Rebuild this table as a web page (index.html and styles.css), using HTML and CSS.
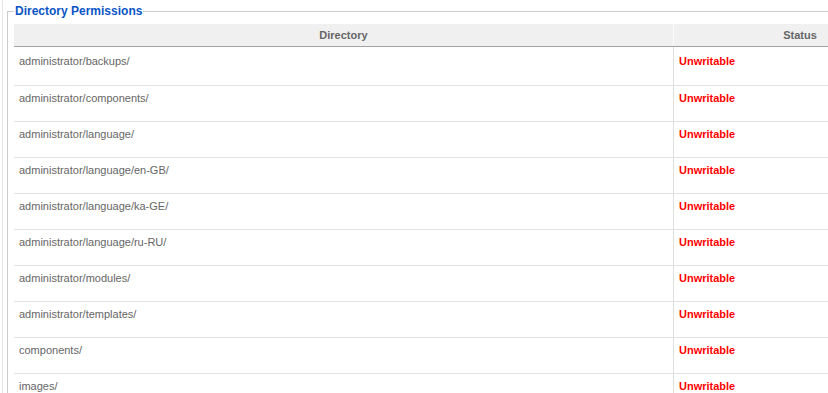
FILE: index.html
```html
<!DOCTYPE html>
<html>
<head>
<meta charset="utf-8">
<title>Directory Permissions</title>
<link rel="stylesheet" href="styles.css">
</head>
<body>
<div class="page">
  <fieldset class="panel">
    <legend class="panel-title">Directory Permissions</legend>
    <table class="adminlist">
      <thead>
        <tr>
          <th class="col-dir">Directory</th>
          <th class="col-status">Status</th>
        </tr>
      </thead>
      <tbody>
        <tr><td>administrator/backups/</td><td class="bad">Unwritable</td></tr>
        <tr><td>administrator/components/</td><td class="bad">Unwritable</td></tr>
        <tr><td>administrator/language/</td><td class="bad">Unwritable</td></tr>
        <tr><td>administrator/language/en-GB/</td><td class="bad">Unwritable</td></tr>
        <tr><td>administrator/language/ka-GE/</td><td class="bad">Unwritable</td></tr>
        <tr><td>administrator/language/ru-RU/</td><td class="bad">Unwritable</td></tr>
        <tr><td>administrator/modules/</td><td class="bad">Unwritable</td></tr>
        <tr><td>administrator/templates/</td><td class="bad">Unwritable</td></tr>
        <tr><td>components/</td><td class="bad">Unwritable</td></tr>
        <tr><td>images/</td><td class="bad">Unwritable</td></tr>
      </tbody>
    </table>
  </fieldset>
</div>
</body>
</html>
```

FILE: styles.css
```css
html, body {
  margin: 0;
  padding: 0;
  overflow: hidden;
  background: #fff;
}

body {
  font-family: "Liberation Sans", Arial, sans-serif;
  font-size: 11px;
  color: #666;
}

.page {
  margin-left: 2px;
  border-left: 1px solid #e6e6e6;
  width: 940px;
  padding-top: 4px;
}

.panel {
  margin: 0 0 0 4px;
  padding: 6px 6px 10px 6px;
  border: 1px solid #cccccc;
  width: 912px;
}

.panel-title {
  padding: 0 1px;
  margin: 0;
  font-size: 12px;
  line-height: 14px;
  font-weight: bold;
  color: #0b55c4;
}

.adminlist {
  width: 912px;
  border-collapse: collapse;
  border-spacing: 0;
  table-layout: fixed;
}

.adminlist th {
  height: 22px;
  padding: 0;
  background: #f0f0f0;
  color: #666;
  font-weight: bold;
  font-size: 11px;
  text-align: center;
  vertical-align: middle;
  border-bottom: 1px solid #a3a3a3;
}

.adminlist th.col-dir {
  width: 659px;
}

.adminlist th.col-status {
  border-left: 1px solid #fafafa;
}

.adminlist td {
  height: 36px;
  padding: 6px 5px 0 5px;
  box-sizing: border-box;
  line-height: 13px;
  vertical-align: top;
  border-bottom: 1px solid #e3e3e3;
  background: #fff;
}

.adminlist td + td {
  border-left: 1px solid #e0e0e0;
}

.adminlist tbody tr:first-child td {
  height: 39px;
  padding-top: 8px;
}

.adminlist td.bad {
  color: #ff0000;
  font-weight: bold;
}
```
